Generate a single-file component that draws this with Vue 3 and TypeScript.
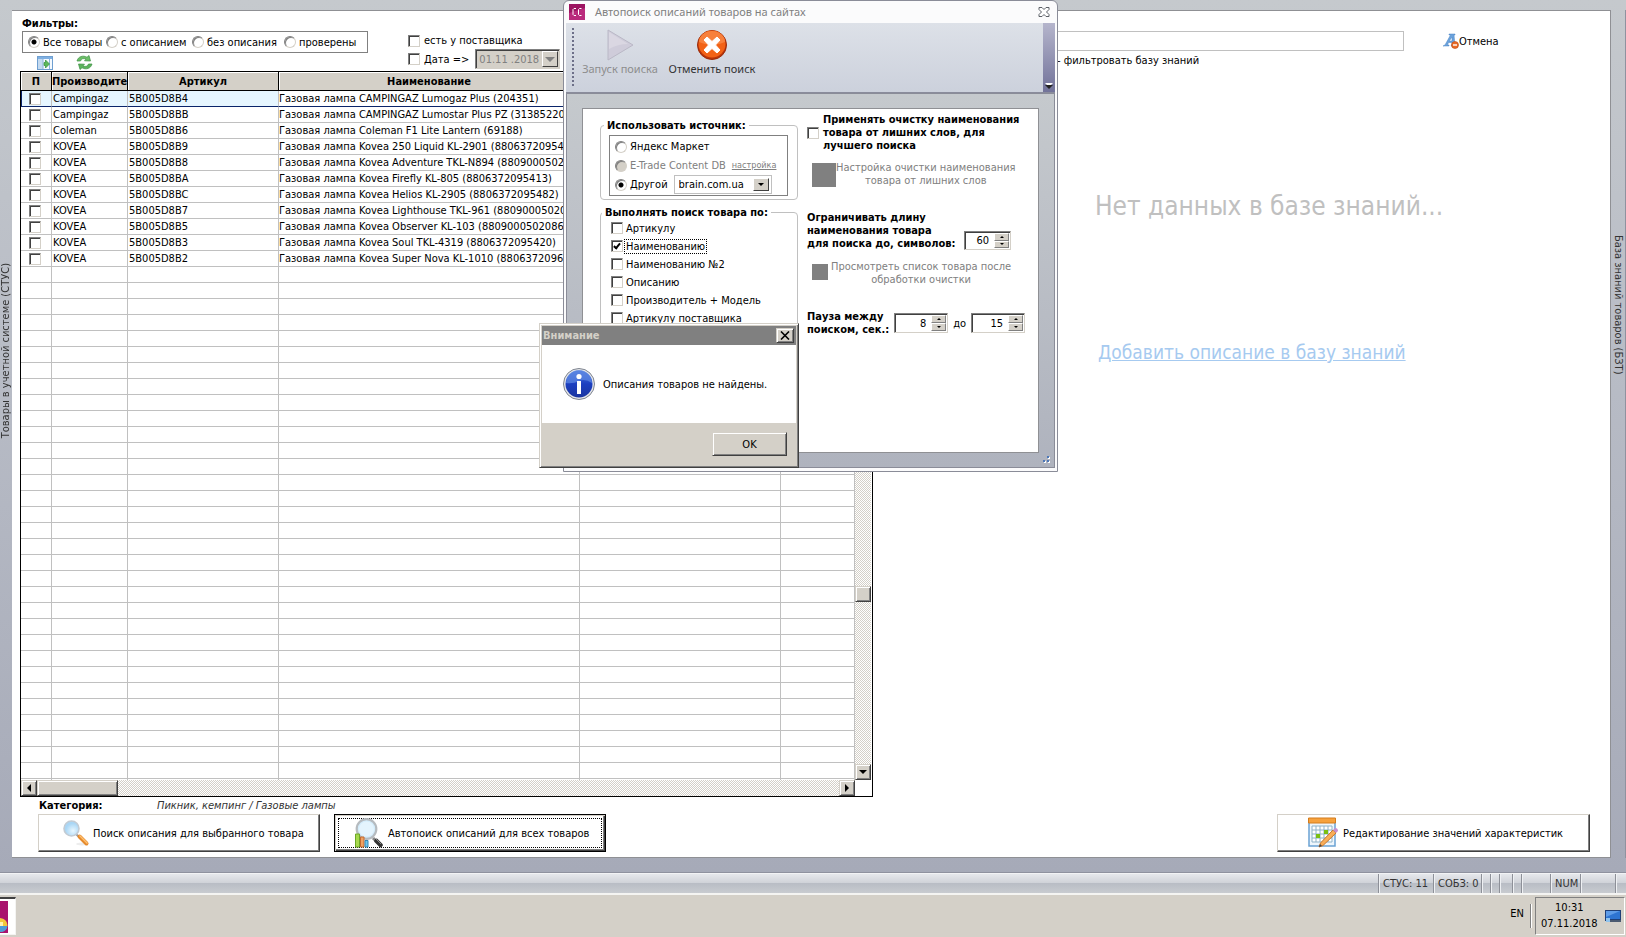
<script setup lang="ts">
import { ref } from 'vue'

interface Product {
  maker: string
  sku: string
  name: string
}

const products: Product[] = [
  { maker: 'Campingaz', sku: '5B005D8B4', name: 'Газовая лампа CAMPINGAZ Lumogaz Plus (204351)' },
  { maker: 'Campingaz', sku: '5B005D8BB', name: 'Газовая лампа CAMPINGAZ Lumostar Plus PZ (3138522041' },
  { maker: 'Coleman', sku: '5B005D8B6', name: 'Газовая лампа Coleman F1 Lite Lantern (69188)' },
  { maker: 'KOVEA', sku: '5B005D8B9', name: 'Газовая лампа Kovea 250 Liquid KL-2901 (8806372095499' },
  { maker: 'KOVEA', sku: '5B005D8B8', name: 'Газовая лампа Kovea Adventure TKL-N894 (88090005020' },
  { maker: 'KOVEA', sku: '5B005D8BA', name: 'Газовая лампа Kovea Firefly KL-805 (8806372095413)' },
  { maker: 'KOVEA', sku: '5B005D8BC', name: 'Газовая лампа Kovea Helios KL-2905 (8806372095482)' },
  { maker: 'KOVEA', sku: '5B005D8B7', name: 'Газовая лампа Kovea Lighthouse TKL-961 (880900050203' },
  { maker: 'KOVEA', sku: '5B005D8B5', name: 'Газовая лампа Kovea Observer KL-103 (8809000502086)' },
  { maker: 'KOVEA', sku: '5B005D8B3', name: 'Газовая лампа Kovea Soul TKL-4319 (8806372095420)' },
  { maker: 'KOVEA', sku: '5B005D8B2', name: 'Газовая лампа Kovea Super Nova KL-1010 (880637209607' },
]
const emptyRows = 33

const filters = ['Все товары', 'с описанием', 'без описания', 'проверены']
const filter = ref('Все товары')
const source = ref('other')
const searchFields = ref([
  { label: 'Артикулу', on: false },
  { label: 'Наименованию', on: true },
  { label: 'Наименованию №2', on: false },
  { label: 'Описанию', on: false },
  { label: 'Производитель + Модель', on: false },
  { label: 'Артикулу поставщика', on: false },
])
const maxLength = ref(60)
const pauseFrom = ref(8)
const pauseTo = ref(15)
</script>

<template>
  <div class="screen">
    <main class="desktop">
      <div class="side side-left"><span>Товары в учетной системе (СТУС)</span></div>
      <div class="panel">
        <section class="goods">
          <div class="filters">
            <div class="filter-main">
              <div class="bold">Фильтры:</div>
              <div class="radio-box">
                <label v-for="f in filters" :key="f"><input v-model="filter" type="radio" name="filter" :value="f">{{ f }}</label>
              </div>
              <div class="tool-icons">
                <button type="button" aria-label="Перейти">
                  <svg width="16" height="14" viewBox="0 0 16 14"><rect x=".5" y=".5" width="15" height="13" fill="#f4f9fe" stroke="#6f9fd0" /><path d="M1 1h14v2H1z" fill="#7fb0e2" /><path d="M1 3h5v10H1z" fill="#c4daf0" /><path d="M6 3v10M12.500 3v10" stroke="#8db4dc" /><path d="M7 6.500h1.500V4l4 4-4 4V9.500H7z" fill="#5cb85a" stroke="#34903a" stroke-width=".7" /></svg>
                </button>
                <button type="button" aria-label="Обновить">
                  <svg width="17" height="15" viewBox="0 0 17 15"><path d="M1 6C2 1.500 7 0 11 2.200L13 .500l1.500 5.500-6-.2 1.500-1.600C7.500 3 5.500 3.500 4.500 6z" fill="#6cbf68" stroke="#3c8f42" stroke-width=".7" /><path d="M16 9c-1 4.500-6 6-10 3.800L4 14.500 2.500 9l6 .2L7 10.800c2.500 1.200 4.500.7 5.500-1.800z" fill="#5cb35c" stroke="#3c8f42" stroke-width=".7" /></svg>
                </button>
              </div>
            </div>
            <div class="filter-extra">
              <label><input type="checkbox">есть у поставщика</label>
              <div class="date-row">
                <label><input type="checkbox">Дата =&gt;</label>
                <div class="combo date">
                  <select disabled aria-label="Дата"><option>01.11 .2018</option></select>
                  <span class="arrow-btn dim"><i class="down" /></span>
                </div>
              </div>
            </div>
          </div>

          <div class="grid-box">
            <div class="grid-view">
              <table>
                <colgroup><col class="c1"><col class="c2"><col class="c3"><col class="c4"><col class="c5"><col></colgroup>
                <thead>
                  <tr><th>П</th><th class="start">Производите</th><th>Артикул</th><th>Наименование</th><th /><th /></tr>
                </thead>
                <tbody>
                  <tr v-for="(p, i) in products" :key="p.sku" :class="{ current: i === 0 }">
                    <td class="tick"><input type="checkbox" :aria-label="p.name"></td>
                    <td class="maker">{{ p.maker }}</td>
                    <td>{{ p.sku }}</td>
                    <td class="name">{{ p.name }}</td>
                    <td /><td />
                  </tr>
                  <tr v-for="n in emptyRows" :key="n"><td /><td /><td /><td /><td /><td /></tr>
                </tbody>
              </table>
            </div>
            <div class="vbar">
              <button type="button" class="raised sq" aria-label="Вверх"><i class="up" /></button>
              <div class="track-top" />
              <div class="raised sq" />
              <div class="track" />
              <button type="button" class="raised sq" aria-label="Вниз"><i class="down" /></button>
            </div>
            <div class="hbar">
              <button type="button" class="raised sq" aria-label="Влево"><i class="left" /></button>
              <div class="raised thumb" />
              <div class="track" />
              <button type="button" class="raised sq" aria-label="Вправо"><i class="right" /></button>
            </div>
          </div>

          <div class="category"><b>Категория:</b><em>Пикник, кемпинг / Газовые лампы</em></div>
          <div class="actions">
            <button type="button" class="big find-one">
              <svg width="28" height="28" viewBox="0 0 28 28"><defs><radialGradient id="lens" cx=".6" cy=".65"><stop offset="0" stop-color="#e8f7ff" /><stop offset="1" stop-color="#a9d6f5" /></radialGradient></defs><ellipse cx="20" cy="25" rx="6" ry="1.500" fill="#ededed" /><path d="M14 15l3 3" stroke="#9a9fa5" stroke-width="2" /><path d="M17.500 17.500l7 7" stroke="#e58a2c" stroke-width="4" stroke-linecap="round" /><path d="M17.500 16.500l8 8" stroke="#ffc070" stroke-width="1.500" /><circle cx="9.500" cy="9.500" r="7.500" fill="url(#lens)" stroke="#c3cbd3" stroke-width="1.600" /></svg>
              Поиск описания для выбранного товара
            </button>
            <button type="button" class="big find-all">
              <span class="focus-ring">
                <svg width="30" height="30" viewBox="0 0 30 30"><path d="M20 20l3 3" stroke="#888" stroke-width="3" /><path d="M23.500 23l4 4" stroke="#333" stroke-width="4.500" stroke-linecap="round" /><path d="M23 21l5 5" stroke="#888" stroke-width="1" /><circle cx="13.500" cy="11" r="9.800" fill="#d3ecfb" stroke="#b6bbbf" stroke-width="2.200" /><circle cx="13.500" cy="11" r="7.500" fill="#e4f4fd" /><path d="M2.500 16h4v13h-4z" fill="#a5d84c" stroke="#6ca827" /><path d="M7.500 19h3.500v10H7.500z" fill="#f0a262" stroke="#c46a31" /><path d="M12 22.500h3V29h-3z" fill="#6cc5ec" stroke="#3789b4" /></svg>
                Автопоиск описаний для всех товаров
              </span>
            </button>
          </div>
        </section>

        <section class="knowledge">
          <div class="search-row">
            <input class="search" type="text" aria-label="Фильтр базы знаний">
            <button type="button" class="plain">
              <svg width="16" height="16" viewBox="0 0 16 16"><path d="M0 13l2-1L7.500 2H6V1h6v1h-1l1 10 1.500 1H8l1-1.500V9.500H5.500l-1 2.500H6v1zM6.300 8H9V4z" fill="#6ba2dc" stroke="#4c86c4" stroke-width=".5" /><circle cx="12" cy="12" r="3.500" fill="#ea6a24" stroke="#b64613" stroke-width=".6" /><path d="M10 12h4" stroke="#fff" stroke-width="1.400" /></svg>Отмена
            </button>
          </div>
          <div class="hint">- фильтровать базу знаний</div>
          <div class="no-data">Нет данных в базе знаний...</div>
          <a class="add" href="#">Добавить описание в базу знаний</a>
          <button type="button" class="big edit">
            <svg width="32" height="32" viewBox="0 0 32 32"><path d="M2 2h26v27H2z" fill="#eef6fc" stroke="#6ba3d3" stroke-width="1.500" /><path d="M1.500 1h27v5h-27z" fill="#f6a13c" stroke="#d47c1c" /><path d="M5 9h20v16H5z" fill="#fff" stroke="#8fb2c8" /><path d="M9 9v16M13 9v16M17 9v16M21 9v16M5 13h20M5 17h20M5 21h20" stroke="#8fb2c8" /><path d="M17 13h4v4h-4zM9 17h4v4H9z" fill="#7abf12" /><path d="M12 30l1.500-4L26 13l3 3-13 12.500z" fill="#f8ad58" stroke="#c9782c" /><path d="M12 30l1-3 2 2z" fill="#444" /><path d="M26 13l2-2q3 0 3 3l-2 2z" fill="#c78fd0" /></svg>
            Редактирование значений характеристик
          </button>
        </section>
      </div>
      <div class="side side-right"><span>База знаний товаров (БЗТ)</span></div>
    </main>

    <footer class="status">
      <span class="cell s-stus">СТУС: 11</span>
      <span class="cell s-sobz">СОБЗ: 0</span>
      <span class="cell s-tiny" /><span class="cell s-tiny" /><span class="cell s-mid" /><span class="cell s-tiny" /><span class="cell s-wide" />
      <span class="cell s-num">NUM</span>
      <span class="cell s-last" /><span class="cell s-end" />
    </footer>

    <div class="taskbar">
      <button type="button" class="task" aria-label="Приложение">
        <svg width="9" height="32" viewBox="0 0 9 32"><path d="M0 0h8v32H0z" fill="#a9126d" /><path d="M0 17q7 1 7.500 7-.5 6-7.500 7z" fill="#f3c83a" /><path d="M0 25h7.500q-1 6-7.500 6z" fill="#4a9bd8" /><path d="M0 21h3v4H0z" fill="#fff2b0" /></svg>
      </button>
      <span class="lang">EN</span>
      <span class="sep" />
      <div class="tray">
        <div class="clock"><span>10:31</span><span>07.11.2018</span></div>
        <svg width="16" height="14" viewBox="0 0 16 14"><path d="M0 1h16v11H0z" fill="#1f3f77" /><path d="M1 2h14v8H1z" fill="#2e74d2" /><path d="M1 2h14L1 8z" fill="#5e9ce8" /><path d="M5 11h11v2H5z" fill="#4b5a70" /><path d="M1 9h4v4H1z" fill="#8fc3ee" /></svg>
      </div>
    </div>

    <div class="window" role="dialog" aria-label="Автопоиск описаний товаров на сайтах">
      <div class="caption">
        <svg width="16" height="16" viewBox="0 0 16 16"><path d="M0 0h16v16H0z" fill="#9c1461" /><path d="M0 9l16-5v12H0z" fill="#b92a7c" /><path d="M7 4.500H5l-1 1v5l1 1h2M12.500 4.500h-2l-1 1v5l1 1h2" fill="none" stroke="#fff" /></svg>
        <span>Автопоиск описаний товаров на сайтах</span>
        <button type="button" class="plain" aria-label="Закрыть">
          <svg width="12" height="10" viewBox="0 0 12 10"><path d="M1 .500h3l2 2 2-2h3v2L8.500 5 11 7.500v2H8l-2-2-2 2H1v-2L3.500 5 1 2.500z" fill="#fff" stroke="#5b5f66" /></svg>
        </button>
      </div>
      <div class="toolbar">
        <span class="grip" />
        <button type="button" class="tool" disabled>
          <svg width="32" height="32" viewBox="0 0 32 32"><path d="M4 1v30l25-15z" fill="#cfccda" stroke="#bab8c6" /><path d="M5 3v17q9-5 19-5z" fill="#dad7e2" /></svg>
          Запуск поиска
        </button>
        <button type="button" class="tool">
          <svg width="32" height="32" viewBox="0 0 32 32"><circle cx="16" cy="16" r="14.500" fill="#b93409" stroke="#9b2c0a" /><circle cx="16" cy="15" r="13.500" fill="#f26216" /><path d="M3 13a13 11 0 0 1 26 0q-13 6-26 0z" fill="#f7803c" /><path d="M11 8l5 4.500L21 8l3 3-4.500 5 4.500 5-3 3-5-4.500L11 24l-3-3 4.500-5L8 11z" fill="#fff" stroke="#fff" stroke-linejoin="round" /></svg>
          Отменить поиск
        </button>
        <span class="overflow"><i class="down light" /></span>
      </div>
      <div class="frame">
        <div class="form">
          <div class="form-col">
            <fieldset class="source">
              <legend>Использовать источник:</legend>
              <div class="source-box">
                <label><input v-model="source" type="radio" name="source" value="market">Яндекс Маркет</label>
                <div class="line"><label class="off"><input v-model="source" type="radio" name="source" value="etrade" disabled>E-Trade Content DB</label><a href="#">настройка</a></div>
                <div class="line"><label><input v-model="source" type="radio" name="source" value="other">Другой</label>
                  <div class="combo site"><select aria-label="Сайт"><option>brain.com.ua</option></select><span class="arrow-btn"><i class="down" /></span></div>
                </div>
              </div>
            </fieldset>
            <fieldset class="by">
              <legend>Выполнять поиск товара по:</legend>
              <label v-for="s in searchFields" :key="s.label"><input v-model="s.on" type="checkbox"><span :class="{ focused: s.on }">{{ s.label }}</span></label>
            </fieldset>
          </div>
          <div class="form-col right">
            <label class="clean bold"><input type="checkbox"><span>Применять очистку наименования товара от лишних слов, для лучшего поиска</span></label>
            <button type="button" class="ghost" disabled><i class="block" /><span>Настройка очистки наименования<br>товара от лишних слов</span></button>
            <div class="limit">
              <label class="bold" for="limit">Ограничивать длину наименования товара<br>для поиска до, символов:</label>
              <div class="spin"><input id="limit" v-model="maxLength" type="text"><span><button type="button" aria-label="Больше" @click="maxLength++"><i class="up" /></button><button type="button" aria-label="Меньше" @click="maxLength--"><i class="down" /></button></span></div>
            </div>
            <button type="button" class="ghost small" disabled><i class="block" /><span>Просмотреть список товара после<br>обработки очистки</span></button>
            <div class="pause">
              <label class="bold" for="from">Пауза между<br>поиском, сек.:</label>
              <div class="spin wide"><input id="from" v-model="pauseFrom" type="text"><span><button type="button" aria-label="Больше" @click="pauseFrom++"><i class="up" /></button><button type="button" aria-label="Меньше" @click="pauseFrom--"><i class="down" /></button></span></div>
              <label for="to">до</label>
              <div class="spin wide"><input id="to" v-model="pauseTo" type="text"><span><button type="button" aria-label="Больше" @click="pauseTo++"><i class="up" /></button><button type="button" aria-label="Меньше" @click="pauseTo--"><i class="down" /></button></span></div>
            </div>
          </div>
        </div>
        <svg class="resize" width="8" height="8" viewBox="0 0 8 8"><path d="M4 0h2v2H4zM0 4h2v2H0zM4 4h2v2H4z" fill="#4d78b8" /><path d="M6 1h1v2H5V2h1zM2 5h1v2H1V6h1zM6 5h1v2H5V6h1z" fill="#fff" /></svg>
      </div>
    </div>

    <div class="message" role="alertdialog" aria-label="Внимание">
      <div class="message-title">
        <span>Внимание</span>
        <button type="button" class="raised" aria-label="Закрыть"><svg width="10" height="9" viewBox="0 0 10 9"><path d="M1 .500l8 8M9 .500l-8 8" stroke="#000" stroke-width="1.600" /></svg></button>
      </div>
      <div class="message-body">
        <svg width="34" height="34" viewBox="0 0 34 34"><defs><linearGradient id="info" x2="0" y2="1"><stop offset="0" stop-color="#4a78dc" /><stop offset=".5" stop-color="#1c3fc0" /><stop offset="1" stop-color="#1a35a0" /></linearGradient></defs><circle cx="17" cy="17" r="15.500" fill="#e4e6ea" stroke="#7f8590" /><circle cx="17" cy="17" r="13.500" fill="url(#info)" /><path d="M4 16a13 13 0 0 1 26 0q-7-5-13-2T4 16z" fill="#5f8ae4" opacity=".7" /><circle cx="17" cy="9.500" r="2.600" fill="#fff" /><path d="M15 14h4v13h-4z" fill="#fff" /></svg>
        <span>Описания товаров не найдены.</span>
      </div>
      <div class="message-foot"><button type="button" class="raised ok">OK</button></div>
    </div>
  </div>
</template>

<style>
body { margin: 0; }
</style>

<style scoped>
.screen { position: relative; display: flex; flex-direction: column; height: 100vh; overflow: hidden; font: 11px/13px "DejaVu Sans Condensed", "DejaVu Sans", sans-serif; color: #000; }
.screen *, .screen *::before, .screen *::after { box-sizing: border-box; }
button, input, select { font: inherit; color: inherit; margin: 0; padding: 0; border: 0; border-radius: 0; background: none; }
button { display: flex; align-items: center; justify-content: center; }
svg { flex: none; display: block; }
label { display: flex; align-items: center; white-space: nowrap; }
.bold { font-weight: bold; }

input[type="checkbox"], input[type="radio"] { appearance: none; flex: none; width: 12px; height: 12px; background: #fff; }
input[type="checkbox"] { border: 1px solid; border-color: #808080 #d4d0c8 #d4d0c8 #808080; box-shadow: inset 1px 1px #404040; margin-right: 4px; }
input[type="checkbox"]:checked { position: relative; }
input[type="checkbox"]:checked::after { content: ""; position: absolute; left: 3px; top: 1px; width: 4px; height: 7px; border: solid #000; border-width: 0 2px 2px 0; transform: rotate(40deg); }
input[type="radio"] { border: 1px solid; border-color: #808080 #d4d0c8 #d4d0c8 #808080; border-radius: 50%; box-shadow: inset 1px 1px #808080; margin-right: 3px; }
input[type="radio"]:checked { background: radial-gradient(circle, #000 2px, #fff 3px); }
input[type="radio"]:disabled { background: #d4d0c8; }

i.down, i.up, i.left, i.right { display: block; width: 0; height: 0; border: 4px solid transparent; }
i.down { border-top-color: #000; border-bottom: 0; }
i.up { border-bottom-color: #000; border-top: 0; }
i.left { border-right-color: #000; border-left: 0; }
i.right { border-left-color: #000; border-right: 0; }
.raised { background: #d4d0c8; border: 1px solid; border-color: #d4d0c8 #404040 #404040 #d4d0c8; box-shadow: inset 1px 1px #fff, inset -1px -1px #808080; }

.desktop { flex: 1; min-height: 0; display: grid; grid-template-columns: 12px 1fr 15px; padding: 10px 0 14px; background: linear-gradient(#c5c9cd, #b7bbc5 45%, #a6aab8); border-bottom: 1px solid #8f929f; }
.side { overflow: hidden; color: #333; line-height: 12px; display: flex; }
.side span { writing-mode: vertical-rl; white-space: nowrap; }
.side-left { align-items: flex-start; padding-top: 253px; }
.side-left span { transform: rotate(180deg); }
.side-right { justify-content: center; padding-top: 225px; border-right: 1px solid #8f929f; }
.panel { display: flex; min-width: 0; min-height: 0; background: #fff; border: 1px solid #8f9094; border-left: 0; padding: 0 20px 5px 8px; }
.goods { flex: 0 0 853px; display: flex; flex-direction: column; min-height: 0; }

.filters { display: flex; height: 60px; padding: 6px 0 0 2px; }
.filter-main { width: 386px; }
.radio-box { display: grid; grid-template-columns: 78px 86px 92px 1fr; width: 346px; height: 22px; margin-top: 1px; padding-left: 5px; border: 1px solid #808080; }
.tool-icons { display: flex; gap: 23px; padding: 2px 0 0 15px; }
.filter-extra { padding-top: 17px; }
.date-row { display: flex; gap: 6px; padding-top: 2px; }
.combo { position: relative; display: flex; height: 19px; }
.combo select { appearance: none; width: 100%; padding-left: 4px; }
.arrow-btn { position: absolute; right: 2px; top: 2px; bottom: 2px; width: 16px; display: grid; place-items: center; background: #d4d0c8; border: 1px solid; border-color: #fff #404040 #404040 #fff; pointer-events: none; }
.arrow-btn i { border-width: 3px; border-bottom: 0; }
.arrow-btn.dim i { border-width: 5px; border-bottom: 0; border-top-color: #808080; }
.date { width: 85px; height: 20px; background: #d4d0c8; border: 1px solid; border-color: #808080 #d4d0c8 #d4d0c8 #808080; box-shadow: inset 1px 1px #404040; }
.date select { color: #808080; opacity: 1; padding-left: 3px; }
.date .arrow-btn { top: 1px; bottom: 1px; right: 1px; }

.grid-box { flex: 1; min-height: 0; display: grid; grid-template: minmax(0, 1fr) 16px / minmax(0, 1fr) 17px; border: 1px solid #000; }
.grid-view { overflow: hidden; min-height: 0; }
table { width: 100%; table-layout: fixed; border-collapse: separate; border-spacing: 0; }
.c1 { width: 31px; } .c2 { width: 76px; } .c3 { width: 151px; } .c4 { width: 301px; } .c5 { width: 201px; }
th { height: 19px; padding: 0; background: #d4d0c8; border-right: 1px solid #000; border-bottom: 1px solid #000; box-shadow: inset 1px 1px #fff; overflow: hidden; white-space: nowrap; line-height: 17px; }
th.start { text-align: left; }
td { height: 16px; padding: 0 0 0 1px; border-right: 1px solid #c0c0c0; border-bottom: 1px solid #c0c0c0; overflow: hidden; white-space: nowrap; line-height: 15px; }
td.name { padding-left: 0; }
td.tick { padding: 0 0 0 8px; }
td.tick input { display: block; margin: 0; }
tr.current td { border-bottom-color: #0a246a; }
tr.current td:nth-child(-n+3) { background: #e6f6ff; }
tr.current td:first-child { box-shadow: inset 1px 0 #0a246a; }
.vbar { display: flex; flex-direction: column; border-right: 1px solid #fff; }
.track, .track-top, .hbar, .vbar { background: repeating-conic-gradient(#d4d0c8 0 25%, #fff 0 50%) 0 0 / 2px 2px; }
.track-top { flex: 500; }
.vbar .track { flex: 163; }
.sq { flex: none; width: 16px; height: 16px; }
.hbar { display: flex; }
.hbar .track { flex: 1; }
.thumb { width: 81px; height: 16px; }

.category { display: flex; height: 17px; padding: 2px 0 0 19px; }
.category b { width: 118px; }
.category em { color: #333; }
.actions { display: flex; gap: 14px; padding-left: 18px; }
.big { height: 38px; background: #fff; white-space: nowrap; border: 1px solid; border-color: #d4d0c8 #404040 #404040 #d4d0c8; box-shadow: inset -1px -1px #808080; gap: 3px; }
.find-one { width: 282px; justify-content: flex-start; padding-left: 23px; }
.find-all { width: 272px; border: 1px solid #000; box-shadow: inset 1px 1px #d4d0c8, inset -1px -1px #404040, inset -2px -2px #808080; padding: 3px; }
.focus-ring { flex: 1; align-self: stretch; display: flex; align-items: center; gap: 5px; padding-left: 14px; border: 1px dotted #000; }

.knowledge { flex: 1; min-width: 0; display: flex; flex-direction: column; align-items: flex-start; }
.search-row { display: flex; align-items: center; gap: 39px; padding: 20px 0 0 19px; }
.search { width: 512px; height: 20px; border: 1px solid #c0c0c0; padding: 0 3px; }
.hint { padding: 3px 0 0 184px; }
.no-data { padding: 121px 0 0 222px; font-size: 26px; line-height: 36px; color: #c0c0c0; white-space: nowrap; }
.add { margin: 116px 0 0 225px; font-size: 19px; line-height: 24px; color: #a6caf0; white-space: nowrap; }
.edit { align-self: flex-end; margin-top: auto; width: 313px; gap: 4px; padding-left: 3px; }

.status { display: flex; justify-content: flex-end; height: 22px; background: linear-gradient(#e6e8ec, #d0d3d9 45%, #b9bdc5 50%, #c8cbd0); border-top: 1px solid #f2f3f5; border-bottom: 2px solid #f4f4f2; color: #333; line-height: 20px; }
.cell { border-left: 1px solid #8d9098; box-shadow: inset 1px 0 #eef0f3; padding-left: 4px; white-space: nowrap; }
.s-stus { width: 55px; } .s-sobz { width: 48px; } .s-tiny { width: 9px; } .s-mid { width: 13px; } .s-wide { width: 29px; } .s-num { width: 30px; } .s-last { width: 35px; } .s-end { width: 11px; }

.taskbar { display: flex; align-items: center; height: 42px; background: #d4d0c8; }
.task { width: 16px; height: 38px; justify-content: flex-start; background: #fff; border: solid; border-width: 2px 1px 1px 0; border-color: #404040 #f4f4f2 #f4f4f2; }
.lang { margin-left: auto; margin-right: 6px; padding-bottom: 5px; }
.sep { width: 2px; height: 24px; margin-right: 3px; border-left: 1px solid #808080; border-right: 1px solid #fff; }
.tray { display: flex; align-items: center; gap: 7px; width: 90px; height: 38px; padding-left: 5px; border: 1px solid; border-color: #808080 #fff #fff #808080; margin-right: 1px; }
.clock { display: flex; flex-direction: column; text-align: center; line-height: 16px; }

.window { position: absolute; left: 563px; top: 0; width: 495px; height: 472px; display: flex; flex-direction: column; background: #fbfbfc; border: 1px solid #8a8c98; border-radius: 6px 6px 0 0; padding: 0 2px 3px; }
.caption { flex: none; display: flex; align-items: center; gap: 10px; height: 22px; padding: 0 5px 0 3px; font: 11px/16px "Noto Sans", sans-serif; color: #808080; }
.caption .plain { margin-left: auto; }
.toolbar { flex: none; display: flex; height: 70px; padding-left: 6px; background: linear-gradient(#dde1e8, #ccd1dc); border-bottom: 1px solid #8a8c9c; }
.grip { width: 2px; margin: 5px 6px 4px 0; background: repeating-linear-gradient(#6d6f88 0 2px, transparent 2px 4px); }
.tool { flex-direction: column; justify-content: flex-start; gap: 0; padding-top: 6px; width: 80px; font: 11px/16px "Noto Sans", sans-serif; color: #333; white-space: nowrap; }
.tool + .tool { width: 92px; margin-left: 6px; }
.tool:disabled { color: #8d8d8d; }
.overflow { margin-left: auto; width: 12px; display: flex; align-items: flex-end; justify-content: center; padding-bottom: 3px; background: linear-gradient(#b5b5cc, #72739a); }
.overflow i { border-top-color: #222; filter: drop-shadow(0 -2px #fff); }
.frame { position: relative; flex: 1; min-height: 0; padding: 14px 15px; background: linear-gradient(#c5c9cd, #afb3be); border: 1px solid #8a8c98; }
.form { display: flex; height: 100%; background: #fff; border: 1px solid #8f9094; padding: 0 8px 0 17px; overflow: hidden; }
.resize { position: absolute; right: 3px; bottom: 3px; }
.form-col { width: 198px; flex: none; }
fieldset { margin: 0; padding: 0; border: 1px solid #c0c0c0; border-radius: 4px; min-width: 0; }
legend { font-weight: bold; margin-left: -5px; padding: 0 3px; white-space: nowrap; }
.source { margin-top: 10px; height: 81px; padding: 3px 9px 0 8px; }
.source-box { height: 61px; border: 1px solid #808080; padding: 1px 0 0 5px; }
.source-box > * { height: 19px; }
.line { display: flex; align-items: center; gap: 6px; }
.off { color: #808080; }
.line a { font-size: 9px; color: #808080; }
.site { width: 98px; border: 1px solid #c0c0c0; }
.by { margin-top: 6px; height: 140px; padding: 0 0 0 10px; }
.by legend { margin-left: -9px; }
.by label { height: 18px; }
.by label span { padding: 0 1px; }
.by input { margin-right: 2px; }
.focused { outline: 1px dotted #000; }
.form-col.right { width: auto; flex: 1; padding: 4px 0 0 9px; }
.clean span { white-space: normal; width: 206px; }
.ghost { margin: 9px 0 0 5px; color: #808080; align-items: flex-start; }
.block { width: 24px; height: 24px; margin-top: 2px; background: #808080; }
.ghost.small { margin-top: 10px; }
.small .block { width: 16px; height: 16px; margin: 4px 3px 0 0; }
.limit { display: flex; align-items: flex-end; margin-top: 24px; gap: 4px; }
.limit .bold { width: 153px; white-space: normal; }
.spin { display: flex; width: 47px; height: 19px; border: 1px solid; border-color: #808080 #d4d0c8 #d4d0c8 #808080; box-shadow: inset 1px 1px #404040; padding: 1px; }
.spin input { flex: 1; min-width: 0; text-align: right; padding-right: 5px; }
.spin span { width: 15px; display: flex; flex-direction: column; }
.spin button { flex: 1; background: #d4d0c8; border: 1px solid; border-color: #fff #808080 #808080 #fff; }
.spin i { border-width: 2px; }
.spin i.up { border-top: 0; } .spin i.down { border-bottom: 0; }
.spin.wide { width: 54px; height: 20px; }
.pause { display: flex; align-items: center; gap: 5px; margin-top: 24px; }

.message { position: absolute; left: 539px; top: 323px; width: 260px; height: 145px; display: flex; flex-direction: column; background: #d4d0c8; border: 1px solid; border-color: #d4d0c8 #404040 #404040 #d4d0c8; box-shadow: inset 1px 1px #fff, inset -1px -1px #808080; padding: 2px; }
.message-title { flex: none; display: flex; align-items: center; justify-content: space-between; height: 19px; padding: 0 2px 0 1px; background: #808080; color: #d4d0c8; font-weight: bold; }
.message-title button { width: 18px; height: 15px; }
.message-body { flex: 1; display: flex; align-items: center; gap: 7px; padding-left: 20px; background: #fff; }
.message-foot { height: 42px; display: flex; justify-content: flex-end; padding: 9px 9px 0 0; }
.ok { width: 75px; height: 24px; }
</style>
